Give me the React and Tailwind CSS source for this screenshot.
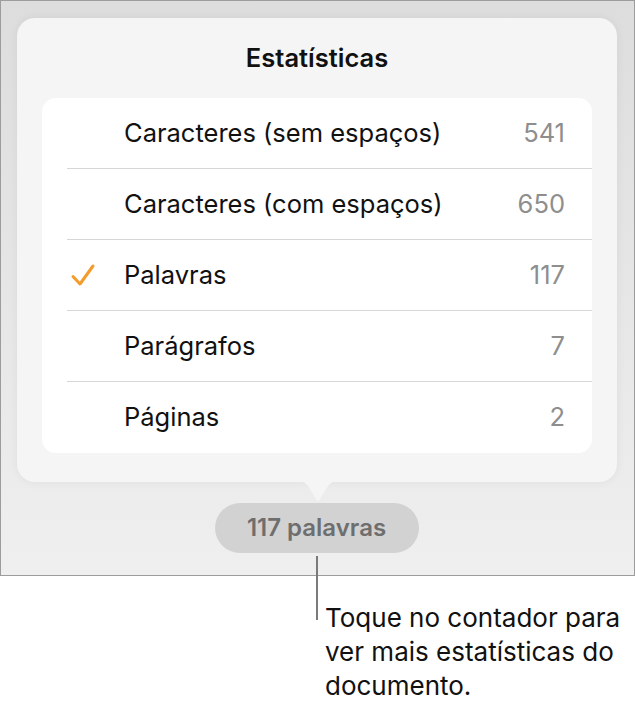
import React from "react";

const rows = [
  { label: "Caracteres (sem espaços)", value: "541" },
  { label: "Caracteres (com espaços)", value: "650" },
  { label: "Palavras", value: "117", checked: true },
  { label: "Parágrafos", value: "7" },
  { label: "Páginas", value: "2" },
];

function Check() {
  return (
    <svg width="26" height="24" viewBox="0 0 26 24" className="absolute left-[28px] top-[23px]">
      <path
        d="M3 13.5 L10 21 L23 3"
        fill="none"
        stroke="#f39c2b"
        strokeWidth="3"
        strokeLinecap="round"
        strokeLinejoin="round"
      />
    </svg>
  );
}

export default function App() {
  return (
    <div
      className="relative w-[635px] h-[710px] bg-white"
      style={{ fontFamily: "Inter, 'Noto Sans', sans-serif" }}
    >
      <div className="h-[576px] border border-[#9c9c9c] bg-linear-to-b from-[#dddddd] to-[#efefef] flex flex-col">
        <div className="mt-[17px] ml-[16px] w-[600px] h-[464px] rounded-[18px] bg-[#f5f5f5] shadow-[0_0_10px_rgba(0,0,0,0.06)] flex flex-col px-[25px]">
          <div className="h-[80px] flex items-center justify-center text-[25.5px] font-semibold text-[#111]">
            Estatísticas
          </div>
          <div className="h-[355px] rounded-[14px] bg-white flex flex-col">
            {rows.map((r, i) => (
              <div key={i} className="relative h-[71px] flex pl-[25px]">
                {r.checked && <Check />}
                <div
                  className={
                    "flex-1 flex items-center justify-between pl-[57px] pr-[27px] " +
                    (i < rows.length - 1 ? "border-b border-[#d6d6d6]" : "")
                  }
                >
                  <span className="text-[25.5px] text-[#111]">{r.label}</span>
                  <span className="text-[25.5px] text-[#8e8e8e]">{r.value}</span>
                </div>
              </div>
            ))}
          </div>
        </div>
        <div className="flex justify-center -mt-px">
          <svg width="44" height="22" viewBox="0 0 44 22" className="ml-px">
            <path
              d="M0 0 C8 0 10 2 14 8 L20 18 C21 20.5 23 20.5 24 18 L30 8 C34 2 36 0 44 0 Z"
              fill="#f5f5f5"
            />
          </svg>
        </div>
        <div className="flex justify-center">
          <div className="w-[204px] h-[50px] rounded-full bg-[#d2d2d2] flex items-center justify-center text-[24px] font-semibold text-[#6e6e6e] -ml-[2px]">
            117 palavras
          </div>
        </div>
      </div>
      <div className="absolute left-[316px] top-[556px] w-[2px] h-[64px] bg-[#7a7a7a]" />
      <div className="pl-[325px] pt-[25px] text-[26px] leading-[34px] text-[#111]">
        Toque no contador para
        <br />
        ver mais estatísticas do
        <br />
        documento.
      </div>
    </div>
  );
}
